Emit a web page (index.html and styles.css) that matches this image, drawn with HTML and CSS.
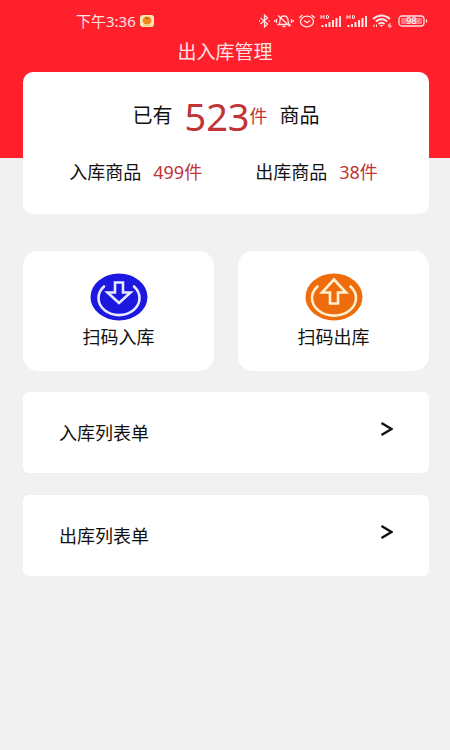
FILE: index.html
```html
<!DOCTYPE html>
<html lang="zh-CN">
<head>
<meta charset="utf-8">
<meta name="viewport" content="width=device-width, initial-scale=1">
<title>出入库管理</title>
<link rel="stylesheet" href="styles.css">
</head>
<body>
<header class="top">
  <div class="status">
    <div class="clock">
      <span>下午3:36</span>
      <svg width="14" height="12" viewBox="0 0 14 12" aria-hidden="true"><rect width="14" height="12" rx="3" fill="#ffe9b8"/><ellipse cx="7" cy="5.5" rx="4.5" ry="4" fill="#f08a1c"/><path d="M5 2.5q2 2 4 .5" stroke="#b85a10" fill="none"/><path d="M3 10.500h8" stroke="#ffc46a"/></svg>
    </div>
    <div class="signals">
      <svg width="11" height="14" viewBox="0 0 11 14" aria-hidden="true"><path d="M1.500 4l7 6-3 3V1l3 3-7 6M0 7h1M9.500 7h1" class="line"/></svg>
      <svg width="20" height="14" viewBox="0 0 20 14" aria-hidden="true"><path d="M5 10.500h10.500q-1.500-1-1.500-4 0-4.500-4-4.500T6 6.500q0 3-1.500 4zM8.500 12.500h3M4 1.500l12 11M2.500 5v4M.8 6v2M17.500 5v4M19.200 6v2" class="line"/></svg>
      <svg width="18" height="14" viewBox="0 0 18 14" aria-hidden="true"><ellipse cx="9" cy="7.500" rx="6.500" ry="5.300" class="line"/><path d="M6 6.500l3 2.200 3-2.200M1.200 3.800L4.500 1M16.800 3.800L13.500 1" class="line"/></svg>
      <svg width="22" height="14" viewBox="0 0 22 14" aria-hidden="true"><path d="M1 1v4M4 1v4M1 3h3M6.500 1.500v3H8q1.500-1.500 0-3z" class="thin"/><path d="M2.500 11v2M6 10v3M9.500 8v5M13 6v7M16.500 4v9M20 2v11" class="bars"/></svg>
      <svg width="22" height="14" viewBox="0 0 22 14" aria-hidden="true"><path d="M1 1v4M4 1v4M1 3h3M6.500 1.500v3H8q1.500-1.500 0-3z" class="thin"/><path d="M2.500 11v2M6 10v3M9.500 8v5M13 6v7M16.500 4v9M20 2v11" class="bars"/></svg>
      <svg width="20" height="14" viewBox="0 0 20 14" aria-hidden="true"><path d="M1 5q8.500-7 17 0M3.800 7.500q5.700-4.700 11.400 0M6.500 10q3-2.500 6 0" class="wifi"/><path d="M7.500 11h4l-2 2z" fill="#ffe4e6"/><path d="M2 10.500V13M4.500 10.500V13M18.500 9.500q-2 0-2 2t1.500 1.800 1.300-1.500-2.300 0" class="thin"/></svg>
      <svg class="battery" width="30" height="12" viewBox="0 0 30 12" role="img" aria-label="98%"><rect x="1" y="1" width="25" height="10" rx="3" class="line"/><rect x="3" y="3" width="21" height="6" rx="1" fill="#ff7a82"/><path d="M28.500 4.500v3" class="line"/><text x="13.500" y="9" text-anchor="middle">98</text></svg>
    </div>
  </div>
  <h1>出入库管理</h1>
</header>
<main>
  <section class="summary">
    <p class="total"><span>已有</span><span class="red"><strong>523</strong><small>件</small></span><span>商品</span></p>
    <div class="counts">
      <p><span>入库商品</span><span class="red">499件</span></p>
      <p><span>出库商品</span><span class="red">38件</span></p>
    </div>
  </section>
  <div class="tiles">
    <button type="button" class="tile">
      <svg width="58" height="48" viewBox="0 0 58 48" aria-hidden="true"><ellipse cx="29" cy="24" rx="28.500" ry="23.500" fill="#1c18e0"/><path d="M14 13.500A20.500 17 0 1 0 44 13.500" class="ring"/><path d="M25 9.500h8v10h7.500L29 30 17.500 19.500H25z" class="ring"/></svg>
      <span>扫码入库</span>
    </button>
    <button type="button" class="tile">
      <svg width="58" height="48" viewBox="0 0 58 48" aria-hidden="true"><ellipse cx="29" cy="24" rx="28.500" ry="23.500" fill="#ee6c0c"/><path d="M12.500 13.500A22 17.500 0 1 0 45.500 13.500" class="ring warm"/><path d="M25 30.500h8V19.500h8L29 6.500 17 19.500h8z" class="ring warm"/></svg>
      <span>扫码出库</span>
    </button>
  </div>
  <nav class="list">
    <a href="#in"><span>入库列表单</span><svg width="13" height="24" viewBox="0 0 13 24" aria-hidden="true"><path d="M1.500 2l10 6-10 6" class="chevron"/></svg></a>
    <a href="#out"><span>出库列表单</span><svg width="13" height="24" viewBox="0 0 13 24" aria-hidden="true"><path d="M1.500 2l10 6-10 6" class="chevron"/></svg></a>
  </nav>
</main>
</body>
</html>
```
FILE: styles.css
```css
* { box-sizing: border-box; }
body {
  margin: 0;
  min-height: 100vh;
  background: #f1f1f1;
  color: #111;
  font-family: "Noto Sans", "Noto Sans CJK SC", sans-serif;
  font-size: 18px;
  line-height: 24px;
}
h1, p { margin: 0; font-weight: 400; }
svg { display: block; flex: none; }
.top {
  height: 158px;
  background: #ff202c;
  color: #ffe4e6;
}
.status {
  display: flex;
  justify-content: space-between;
  align-items: center;
  height: 40px;
  padding: 2px 22px 0 76px;
  font-size: 15px;
}
.clock, .signals { display: flex; align-items: center; gap: 4px; }
.line, .thin, .bars, .wifi { fill: none; stroke: #ffe4e6; }
.line { stroke-width: 1.3px; }
.thin { stroke-width: 1px; }
.bars { stroke-width: 2px; }
.wifi { stroke-width: 2px; }
.battery { margin-left: 2px; }
.battery text {
  fill: #fff;
  font-size: 9px;
}
.top h1 { font-size: 19px; text-align: center; }
main {
  display: flex;
  flex-direction: column;
  margin-top: -86px;
  padding: 0 21px 24px 23px;
}
.summary {
  padding: 20px 0 30px;
  border-radius: 10px;
  background: #fff;
}
.total {
  display: flex;
  justify-content: center;
  align-items: center;
  gap: 12px;
  height: 48px;
  font-size: 20px;
}
.red { color: #c03438; }
.total .red { display: flex; align-items: center; }
.total strong { font-size: 38px; font-weight: 400; line-height: 48px; }
.total small { font-size: 18px; }
.counts {
  display: flex;
  justify-content: center;
  gap: 53px;
  margin-top: 20px;
  padding-right: 5px;
}
.counts p { display: flex; gap: 12px; }
.tiles {
  display: grid;
  grid-template-columns: 1fr 1fr;
  gap: 24px;
  margin-top: 37px;
}
.tile {
  display: flex;
  flex-direction: column;
  align-items: center;
  gap: 4px;
  padding: 22px 0;
  border: 0;
  border-radius: 15px;
  background: #fff;
  color: inherit;
  font: inherit;
}
.ring { fill: none; stroke: #e8eaff; stroke-width: 2.6px; stroke-linecap: round; }
.warm { stroke: #fff0cf; }
.list {
  display: grid;
  gap: 22px;
  margin-top: 21px;
}
.list a {
  display: flex;
  justify-content: space-between;
  align-items: center;
  padding: 29px 36px 28px;
  border-radius: 6px;
  background: #fff;
  color: inherit;
  text-decoration: none;
}
.chevron { fill: none; stroke: #111; stroke-width: 2.4px; }
```
